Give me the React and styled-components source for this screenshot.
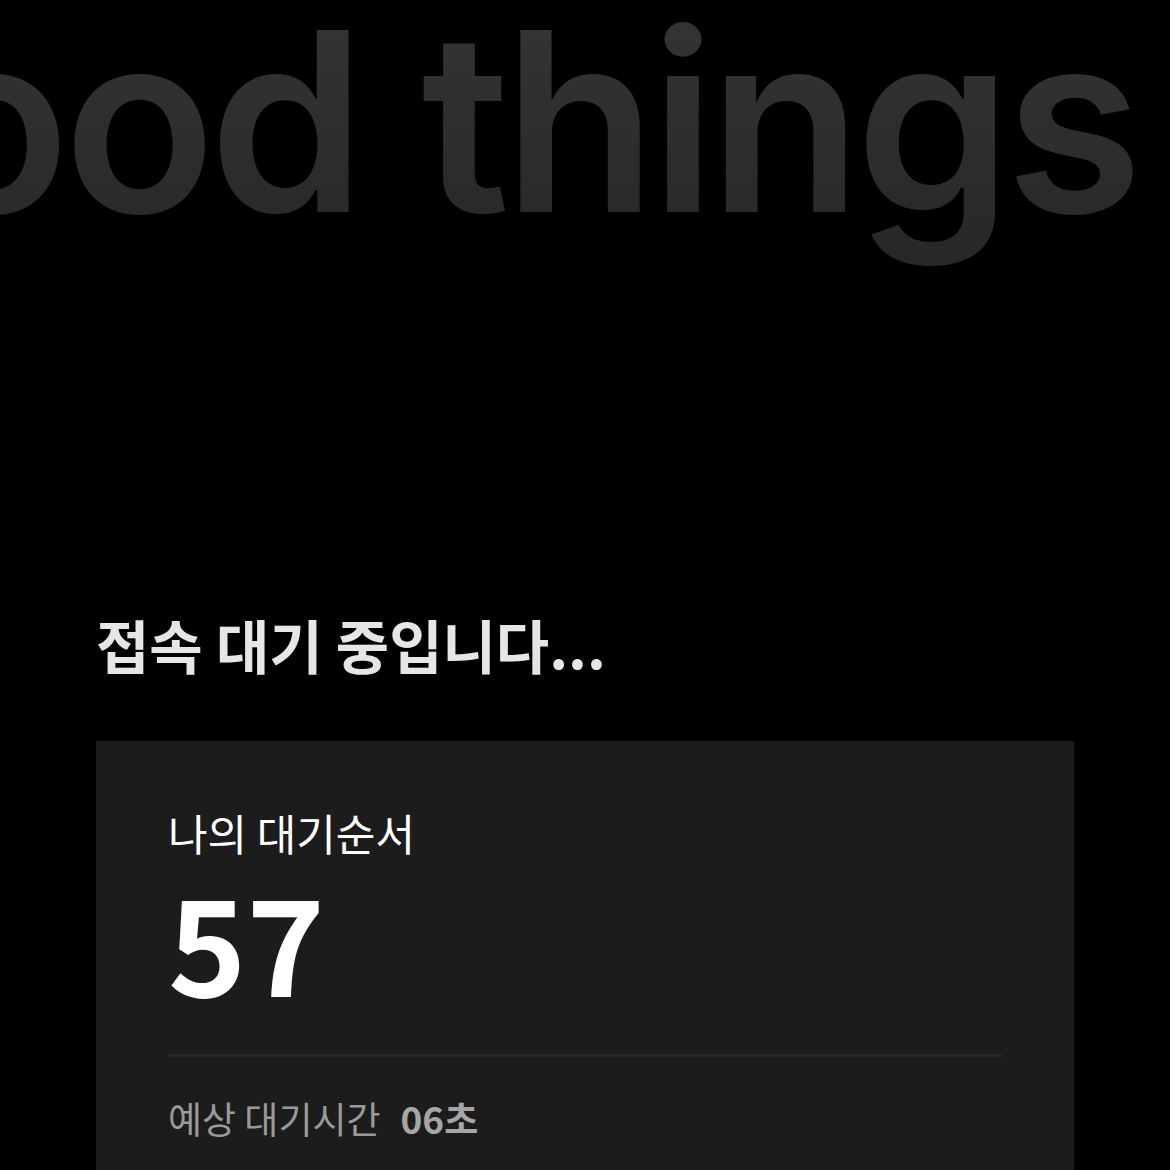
import React from 'react'
import styled, { createGlobalStyle } from 'styled-components'

const GlobalStyle = createGlobalStyle`
    html, body {
        margin: 0;
        padding: 0;
        background: #000;
    }
    body {
        font-family: "Noto Sans CJK KR", "Noto Sans", sans-serif;
        -webkit-font-smoothing: antialiased;
    }
`

const Page = styled.div`
    min-height: 100vh;
    background: #000;
    overflow: hidden;
`

const Hero = styled.div`
    height: 604px;
    overflow: hidden;
    white-space: nowrap;
`

const HeroText = styled.div`
    display: inline-block;
    margin-left: -232px;
    margin-top: -29px;
    font-family: Inter, "Noto Sans", sans-serif;
    font-size: 250px;
    font-weight: 600;
    line-height: 1.2;
    letter-spacing: -6.5px;
    word-spacing: 6px;
    background: linear-gradient(180deg, #363636 0%, #272727 100%);
    -webkit-background-clip: text;
    background-clip: text;
    color: transparent;
`

const Content = styled.main`
    padding: 0 96px;
`

const Title = styled.h1`
    margin: 0 0 56px;
    font-size: 58px;
    font-weight: 700;
    line-height: 1.4;
    color: #e6e6e6;
`

const Card = styled.section`
    background: #1c1c1c;
    padding: 64px 72px 60px;
`

const Label = styled.div`
    font-size: 43px;
    font-weight: 400;
    line-height: 1.3;
    color: #fff;
`

const Rank = styled.div`
    font-size: 133px;
    font-weight: 700;
    line-height: 1;
    color: #fff;
    margin-top: 12px;
`

const Divider = styled.hr`
    border: 0;
    height: 3px;
    background: #262626;
    margin: 48px 0 34px;
`

const Estimate = styled.div`
    display: flex;
    align-items: baseline;
    gap: 20px;
    font-size: 37px;
    color: #9a9a9a;
`

const Strong = styled.span`
    font-weight: 700;
    color: #a6a6a6;
`

function App() {
    const position = 57
    const seconds = '06'

    return (
        <>
            <GlobalStyle />
            <Page>
                <Hero>
                    <HeroText>good things</HeroText>
                </Hero>
                <Content>
                    <Title>접속 대기 중입니다...</Title>
                    <Card>
                        <Label>나의 대기순서</Label>
                        <Rank>{position}</Rank>
                        <Divider />
                        <Estimate>
                            <span>예상 대기시간</span>
                            <Strong>{seconds}초</Strong>
                        </Estimate>
                    </Card>
                </Content>
            </Page>
        </>
    )
}

export default App
